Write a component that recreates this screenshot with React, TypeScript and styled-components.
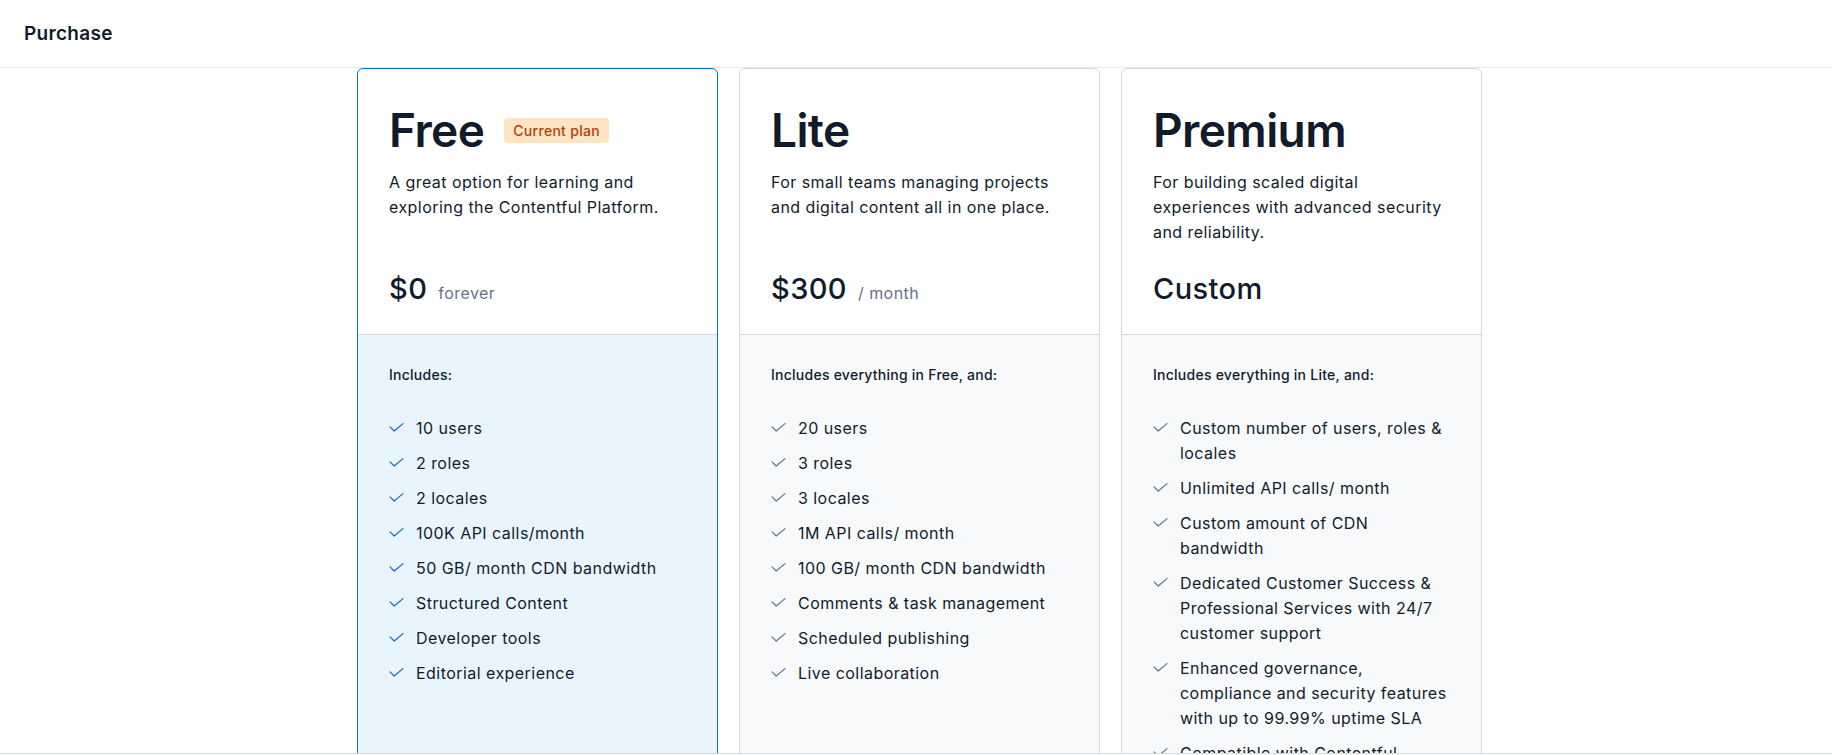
import React from "react";
import styled, { createGlobalStyle } from "styled-components";

const GlobalStyle = createGlobalStyle`
  html, body {
    margin: 0;
    padding: 0;
    background: #ffffff;
    overflow: hidden;
  }
  body {
    font-family: Inter, "Noto Sans", "Liberation Sans", sans-serif;
    color: #111b2b;
    -webkit-font-smoothing: antialiased;
  }
  * { box-sizing: border-box; }
`;

const Page = styled.div`
  display: flex;
  flex-direction: column;
  height: 754px;
  border-bottom: 1px solid #d3dce3;
  overflow: hidden;
`;

const TopBar = styled.header`
  flex: none;
  height: 68px;
  display: flex;
  align-items: center;
  padding: 0 24px;
  border-bottom: 1px solid #e7ebee;
`;

const PageTitle = styled.h1`
  margin: 0;
  font-size: 19px;
  font-weight: 600;
  line-height: 24px;
  letter-spacing: 0.3px;
  color: #111b2b;
`;

const Content = styled.main`
  flex: 1;
  min-height: 0;
  overflow: hidden;
  display: flex;
  justify-content: center;
  padding-left: 7px;
`;

const Plans = styled.div`
  display: grid;
  grid-template-columns: repeat(3, 361px);
  column-gap: 21px;
  align-items: stretch;
`;

const Card = styled.section<{ $current?: boolean }>`
  display: flex;
  flex-direction: column;
  min-height: 900px;
  background: #ffffff;
  border: 1px solid ${(p) => (p.$current ? "#036fe3" : "#cfd9e0")};
  border-radius: 6px;
  overflow: hidden;
`;

const CardHeader = styled.div`
  flex: none;
  height: 266px;
  display: flex;
  flex-direction: column;
  padding: 33px 31px 27px;
  border-bottom: 1px solid #cfd9e0;
`;

const TitleRow = styled.div`
  display: flex;
  align-items: center;
  gap: 20px;
`;

const PlanName = styled.h2`
  margin: 0;
  font-size: 46px;
  line-height: 56px;
  font-weight: 600;
  letter-spacing: -0.6px;
  color: #111b2b;
`;

const Badge = styled.span`
  display: inline-flex;
  align-items: center;
  height: 25px;
  padding: 0 9px;
  border-radius: 4px;
  background: #fee4c3;
  color: #b8400b;
  font-size: 14px;
  font-weight: 500;
  letter-spacing: 0.3px;
`;

const Description = styled.p`
  margin: 12px 0 0;
  font-size: 16px;
  line-height: 25px;
  letter-spacing: 0.45px;
  color: #111b2b;
`;

const PriceRow = styled.div`
  margin-top: auto;
  display: flex;
  align-items: baseline;
  gap: 11px;
`;

const Price = styled.span`
  font-size: 29px;
  line-height: 36px;
  font-weight: 500;
  letter-spacing: 0.4px;
  color: #111b2b;
`;

const PricePeriod = styled.span`
  font-size: 16px;
  letter-spacing: 0.45px;
  color: #67728a;
`;

const CardBody = styled.div<{ $current?: boolean }>`
  flex: 1;
  padding: 30px 31px 32px;
  background: ${(p) => (p.$current ? "#e8f5ff" : "#f7f9fa")};
`;

const IncludesLabel = styled.div`
  font-size: 14px;
  line-height: 20px;
  font-weight: 500;
  letter-spacing: 0.25px;
  color: #111b2b;
`;

const FeatureList = styled.ul`
  list-style: none;
  margin: 31px 0 0;
  padding: 0;
  display: flex;
  flex-direction: column;
  gap: 10px;
`;

const FeatureItem = styled.li`
  display: flex;
  align-items: flex-start;
  gap: 12px;
  font-size: 16px;
  line-height: 25px;
  letter-spacing: 0.45px;
  color: #111b2b;
`;

const CheckIcon = styled.svg<{ $current?: boolean }>`
  flex: none;
  width: 15px;
  height: 9px;
  margin-top: 7px;
  color: ${(p) => (p.$current ? "#1a66d2" : "#67728a")};
`;

const Check = ({ current }: { current?: boolean }) => (
  <CheckIcon $current={current} viewBox="0 0 15 9" fill="none" aria-hidden="true">
    <polyline
      points="1,3.8 5.2,8 14,0.6"
      stroke="currentColor"
      strokeWidth="1.2"
      strokeLinecap="round"
      strokeLinejoin="round"
    />
  </CheckIcon>
);

type Plan = {
  name: string;
  current?: boolean;
  description: string;
  price: string;
  period?: string;
  includes: string;
  features: string[];
};

const plans: Plan[] = [
  {
    name: "Free",
    current: true,
    description: "A great option for learning and exploring the Contentful Platform.",
    price: "$0",
    period: "forever",
    includes: "Includes:",
    features: [
      "10 users",
      "2 roles",
      "2 locales",
      "100K API calls/month",
      "50 GB/ month CDN bandwidth",
      "Structured Content",
      "Developer tools",
      "Editorial experience",
    ],
  },
  {
    name: "Lite",
    description: "For small teams managing projects and digital content all in one place.",
    price: "$300",
    period: "/ month",
    includes: "Includes everything in Free, and:",
    features: [
      "20 users",
      "3 roles",
      "3 locales",
      "1M API calls/ month",
      "100 GB/ month CDN bandwidth",
      "Comments & task management",
      "Scheduled publishing",
      "Live collaboration",
    ],
  },
  {
    name: "Premium",
    description: "For building scaled digital experiences with advanced security and reliability.",
    price: "Custom",
    includes: "Includes everything in Lite, and:",
    features: [
      "Custom number of users, roles & locales",
      "Unlimited API calls/ month",
      "Custom amount of CDN bandwidth",
      "Dedicated Customer Success & Professional Services with 24/7 customer support",
      "Enhanced governance, compliance and security features with up to 99.99% uptime SLA",
      "Compatible with Contentful Studio",
    ],
  },
];

export default function App() {
  return (
    <>
      <GlobalStyle />
      <Page>
        <TopBar>
          <PageTitle>Purchase</PageTitle>
        </TopBar>
        <Content>
          <Plans>
            {plans.map((plan) => (
              <Card key={plan.name} $current={plan.current}>
                <CardHeader>
                  <TitleRow>
                    <PlanName>{plan.name}</PlanName>
                    {plan.current && <Badge>Current plan</Badge>}
                  </TitleRow>
                  <Description>{plan.description}</Description>
                  <PriceRow>
                    <Price>{plan.price}</Price>
                    {plan.period && <PricePeriod>{plan.period}</PricePeriod>}
                  </PriceRow>
                </CardHeader>
                <CardBody $current={plan.current}>
                  <IncludesLabel>{plan.includes}</IncludesLabel>
                  <FeatureList>
                    {plan.features.map((f) => (
                      <FeatureItem key={f}>
                        <Check current={plan.current} />
                        <span>{f}</span>
                      </FeatureItem>
                    ))}
                  </FeatureList>
                </CardBody>
              </Card>
            ))}
          </Plans>
        </Content>
      </Page>
    </>
  );
}
